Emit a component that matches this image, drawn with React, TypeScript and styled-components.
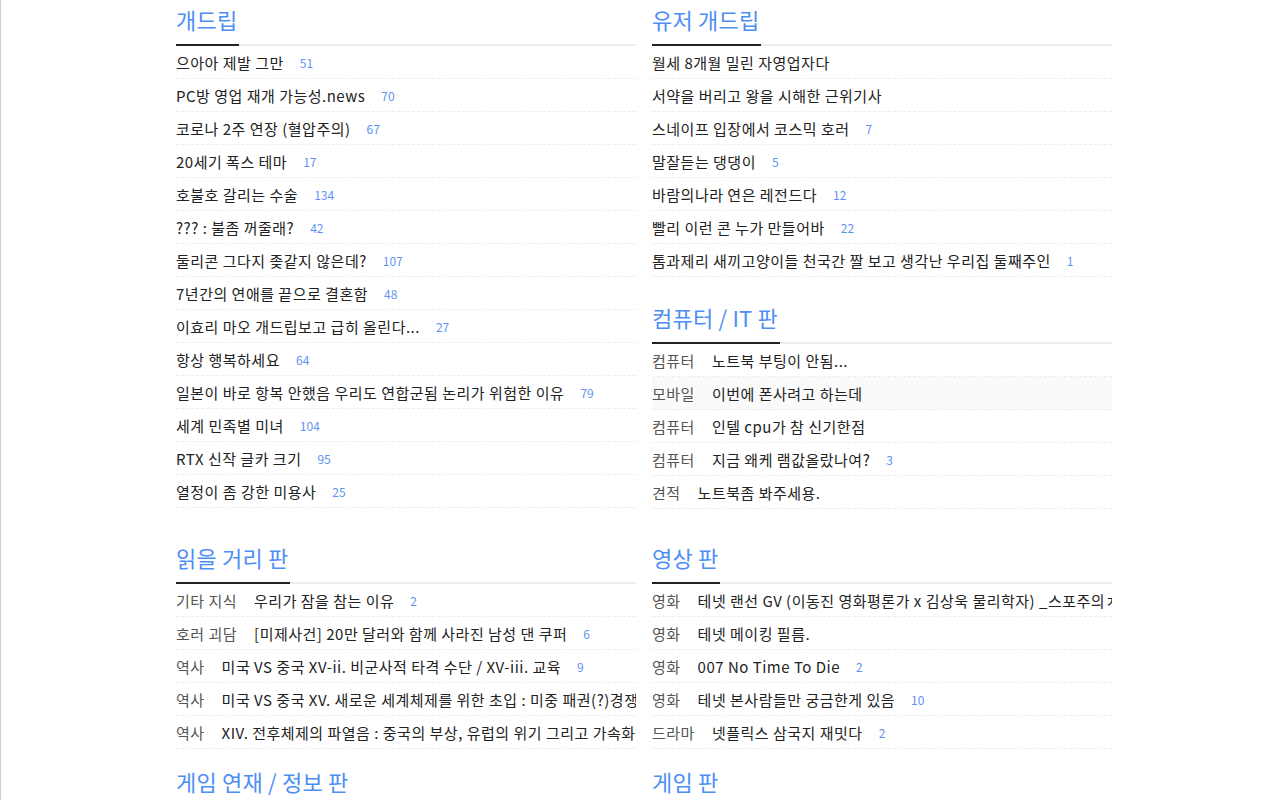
import React from "react";
import styled, { createGlobalStyle } from "styled-components";

const Global = createGlobalStyle`
  html, body { margin: 0; padding: 0; background: #fff; }
  body {
    font-family: "Noto Sans CJK KR", "Noto Sans", sans-serif;
    color: #222;
    overflow: hidden;
  }
`;

const Page = styled.div`
  min-height: 100vh;
  border-left: 1px solid #cfcfcf;
  padding-left: 175px;
  box-sizing: border-box;
`;

const SectionRow = styled.div<{ $gapTop: number }>`
  display: grid;
  grid-template-columns: 460px 460px;
  column-gap: 16px;
  align-items: start;
  margin-top: ${(p) => p.$gapTop}px;
`;

const Column = styled.div`
  display: flex;
  flex-direction: column;
  gap: 21px;
  min-width: 0;
`;

const Section = styled.section`
  min-width: 0;
`;

const Header = styled.div`
  height: 44px;
  border-bottom: 2px solid #ececec;
  display: flex;
  align-items: flex-end;
`;

const Title = styled.h2`
  margin: 0 0 -2px 0;
  padding: 0 2px 9px 0;
  font-size: 22px;
  line-height: 32px;
  font-weight: 400;
  letter-spacing: 0.2px;
  color: #4d8ef5;
  border-bottom: 2px solid #222;
  white-space: nowrap;
`;

const List = styled.ul`
  list-style: none;
  margin: 0;
  padding: 0;
`;

const Row = styled.li<{ $hover?: boolean }>`
  height: 32px;
  border-bottom: 1px dashed #ececec;
  display: flex;
  align-items: center;
  white-space: nowrap;
  overflow: hidden;
  font-size: 15px;
  letter-spacing: 0.5px;
  background: ${(p) => (p.$hover ? "#fafafa" : "transparent")};
`;

const Category = styled.span`
  color: #555;
  margin-right: 17px;
  flex: none;
`;

const Subject = styled.span`
  color: #222;
  flex: 0 1 auto;
  min-width: 0;
  overflow: hidden;
`;

const Count = styled.span`
  color: #5f93f2;
  font-size: 12px;
  letter-spacing: 0;
  margin-left: 16px;
  flex: none;
`;

type Item = { t: string; c?: number; cat?: string; hover?: boolean };

const Board = ({ title, items }: { title: string; items: Item[] }) => (
  <Section>
    <Header>
      <Title>{title}</Title>
    </Header>
    <List>
      {items.map((it, i) => (
        <Row key={i} $hover={it.hover}>
          {it.cat && <Category>{it.cat}</Category>}
          <Subject>{it.t}</Subject>
          {it.c !== undefined && <Count>{it.c}</Count>}
        </Row>
      ))}
    </List>
  </Section>
);

const gaedrip: Item[] = [
  { t: "으아아 제발 그만", c: 51 },
  { t: "PC방 영업 재개 가능성.news", c: 70 },
  { t: "코로나 2주 연장 (혈압주의)", c: 67 },
  { t: "20세기 폭스 테마", c: 17 },
  { t: "호불호 갈리는 수술", c: 134 },
  { t: "??? : 불좀 꺼줄래?", c: 42 },
  { t: "둘리콘 그다지 좆같지 않은데?", c: 107 },
  { t: "7년간의 연애를 끝으로 결혼함", c: 48 },
  { t: "이효리 마오 개드립보고 급히 올린다...", c: 27 },
  { t: "항상 행복하세요", c: 64 },
  { t: "일본이 바로 항복 안했음 우리도 연합군됨 논리가 위험한 이유", c: 79 },
  { t: "세계 민족별 미녀", c: 104 },
  { t: "RTX 신작 글카 크기", c: 95 },
  { t: "열정이 좀 강한 미용사", c: 25 },
];

const userGaedrip: Item[] = [
  { t: "월세 8개월 밀린 자영업자다" },
  { t: "서약을 버리고 왕을 시해한 근위기사" },
  { t: "스네이프 입장에서 코스믹 호러", c: 7 },
  { t: "말잘듣는 댕댕이", c: 5 },
  { t: "바람의나라 연은 레전드다", c: 12 },
  { t: "빨리 이런 콘 누가 만들어바", c: 22 },
  { t: "톰과제리 새끼고양이들 천국간 짤 보고 생각난 우리집 둘째주인", c: 1 },
];

const computer: Item[] = [
  { cat: "컴퓨터", t: "노트북 부팅이 안됨..." },
  { cat: "모바일", t: "이번에 폰사려고 하는데", hover: true },
  { cat: "컴퓨터", t: "인텔 cpu가 참 신기한점" },
  { cat: "컴퓨터", t: "지금 왜케 램값올랐나여?", c: 3 },
  { cat: "견적", t: "노트북좀 봐주세용." },
];

const reading: Item[] = [
  { cat: "기타 지식", t: "우리가 잠을 참는 이유", c: 2 },
  { cat: "호러 괴담", t: "[미제사건] 20만 달러와 함께 사라진 남성 댄 쿠퍼", c: 6 },
  { cat: "역사", t: "미국 VS 중국 XV-ii. 비군사적 타격 수단 / XV-iii. 교육", c: 9 },
  { cat: "역사", t: "미국 VS 중국 XV. 새로운 세계체제를 위한 초입 : 미중 패권(?)경쟁과 신냉전" },
  { cat: "역사", t: "XIV. 전후체제의 파열음 : 중국의 부상, 유럽의 위기 그리고 가속화하는 세계화" },
];

const video: Item[] = [
  { cat: "영화", t: "테넷 랜선 GV (이동진 영화평론가 x 김상욱 물리학자) _스포주의ㅈ" },
  { cat: "영화", t: "테넷 메이킹 필름." },
  { cat: "영화", t: "007 No Time To Die", c: 2 },
  { cat: "영화", t: "테넷 본사람들만 궁금한게 있음", c: 10 },
  { cat: "드라마", t: "넷플릭스 삼국지 재밋다", c: 2 },
];

export default function App() {
  return (
    <>
      <Global />
      <Page>
        <SectionRow $gapTop={0}>
          <Column>
            <Board title="개드립" items={gaedrip} />
          </Column>
          <Column>
            <Board title="유저 개드립" items={userGaedrip} />
            <Board title="컴퓨터 / IT 판" items={computer} />
          </Column>
        </SectionRow>
        <SectionRow $gapTop={29}>
          <Board title="읽을 거리 판" items={reading} />
          <Board title="영상 판" items={video} />
        </SectionRow>
        <SectionRow $gapTop={13}>
          <Board title="게임 연재 / 정보 판" items={[]} />
          <Board title="게임 판" items={[]} />
        </SectionRow>
      </Page>
    </>
  );
}
